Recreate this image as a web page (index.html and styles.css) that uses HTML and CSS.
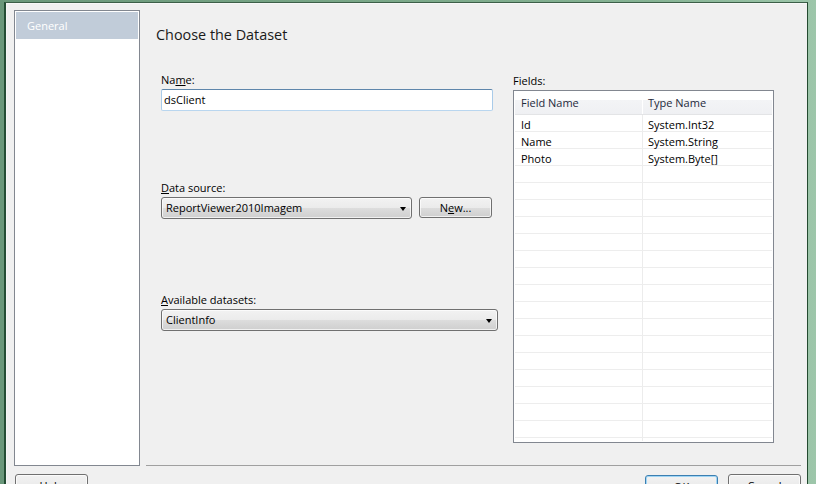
FILE: index.html
```html
<!DOCTYPE html>
<html>
<head>
<meta charset="utf-8">
<link rel="stylesheet" href="styles.css">
</head>
<body>
<div class="frame">
  <div class="outer">
    <div class="window">
      <div class="main">
        <div class="nav">
          <div class="nav-item selected">General</div>
        </div>
        <div class="page">
          <div class="title">Choose the Dataset</div>
          <div class="form">
            <div class="col-left">
              <div class="group g-name">
                <div class="label">Na<u>m</u>e:</div>
                <div class="textbox">dsClient</div>
              </div>
              <div class="group g-source">
                <div class="label"><u>D</u>ata source:</div>
                <div class="row">
                  <div class="combo w-source"><span>ReportViewer2010Imagem</span><i class="arrow"></i></div>
                  <div class="btn btn-new">N<u>e</u>w...</div>
                </div>
              </div>
              <div class="group g-avail">
                <div class="label"><u>A</u>vailable datasets:</div>
                <div class="combo w-full"><span>ClientInfo</span><i class="arrow"></i></div>
              </div>
            </div>
            <div class="col-right">
              <div class="label">Fields:</div>
              <div class="grid">
                <div class="grid-head">
                  <div class="c1">Field Name</div>
                  <div class="c2">Type Name</div>
                </div>
                <div class="grid-body">
                  <div class="grow"><div class="c1">Id</div><div class="c2">System.Int32</div></div>
                  <div class="grow"><div class="c1">Name</div><div class="c2">System.String</div></div>
                  <div class="grow"><div class="c1">Photo</div><div class="c2">System.Byte[]</div></div>
                  <div class="grow"><div class="c1"></div><div class="c2"></div></div>
                  <div class="grow"><div class="c1"></div><div class="c2"></div></div>
                  <div class="grow"><div class="c1"></div><div class="c2"></div></div>
                  <div class="grow"><div class="c1"></div><div class="c2"></div></div>
                  <div class="grow"><div class="c1"></div><div class="c2"></div></div>
                  <div class="grow"><div class="c1"></div><div class="c2"></div></div>
                  <div class="grow"><div class="c1"></div><div class="c2"></div></div>
                  <div class="grow"><div class="c1"></div><div class="c2"></div></div>
                  <div class="grow"><div class="c1"></div><div class="c2"></div></div>
                  <div class="grow"><div class="c1"></div><div class="c2"></div></div>
                  <div class="grow"><div class="c1"></div><div class="c2"></div></div>
                  <div class="grow"><div class="c1"></div><div class="c2"></div></div>
                  <div class="grow"><div class="c1"></div><div class="c2"></div></div>
                  <div class="grow"><div class="c1"></div><div class="c2"></div></div>
                  <div class="grow"><div class="c1"></div><div class="c2"></div></div>
                  <div class="grow"><div class="c1"></div><div class="c2"></div></div>
                  <div class="grow"><div class="c1"></div><div class="c2"></div></div>
                </div>
              </div>
            </div>
          </div>
        </div>
      </div>
      <div class="footer">
        <div class="btn btn-foot"><u>H</u>elp</div>
        <div class="spacer"></div>
        <div class="btn btn-foot btn-default">OK</div>
        <div class="btn btn-foot">Cancel</div>
      </div>
    </div>
  </div>
</div>
</body>
</html>
```
FILE: styles.css
```css
html, body {
  margin: 0;
  padding: 0;
}
body {
  width: 816px;
  height: 484px;
  overflow: hidden;
  font-family: "Open Sans", "Noto Sans", sans-serif;
  font-size: 11px;
  color: #000;
}
u { text-decoration: underline; text-underline-offset: 1px; }

.frame {
  height: 484px;
  box-sizing: border-box;
  padding: 2px 8px 0 4px;
  background: linear-gradient(to right, #6a977a 0, #78a586 40%, #86b394 80%, #9dc6aa 100%);
}
.outer {
  height: 100%;
  box-sizing: border-box;
  border-top: 1px solid #3c5f48;
  border-left: 2px solid #244d34;
  border-right: 1px solid #234a30;
}
.window {
  height: 100%;
  box-sizing: border-box;
  border-top: 1px solid #f8f8f8;
  border-left: 1px solid #f6f6f6;
  background: #f0f0f0;
  padding: 6px 6px 0 7px;
}

.main {
  display: flex;
  height: 456px;
}
.nav {
  width: 126px;
  height: 456px;
  box-sizing: border-box;
  border: 1px solid #828790;
  background: #fff;
  padding: 1px;
}
.nav-item {
  height: 27px;
  line-height: 27px;
  padding-left: 11px;
}
.nav-item.selected {
  background: #c1ccd9;
  color: #fff;
}

.page {
  flex: 1;
  margin-left: 6px;
  height: 456px;
  box-sizing: border-box;
  border-bottom: 1px solid #a0a0a0;
  padding-left: 10px;
}
.title {
  margin-top: 15px;
  font-size: 14.4px;
  line-height: 20px;
  color: #1a1a1a;
}
.form {
  display: flex;
  gap: 15px;
  margin-top: 27px;
  padding-left: 5px;
}
.col-left {
  width: 337px;
}
.label {
  line-height: 16px;
  margin-bottom: 1px;
}
.g-source { margin-top: 69px; }
.g-avail { margin-top: 73px; }

.textbox {
  width: 332px;
  height: 22px;
  box-sizing: border-box;
  border: 1px solid;
  border-color: #5e86ab #a9cbe9 #b9d6ef #a9cbe9;
  border-radius: 2px;
  background: #fff;
  padding-left: 2px;
  line-height: 19px;
}
.row {
  display: flex;
  align-items: flex-start;
}
.combo {
  height: 22px;
  box-sizing: border-box;
  border: 1px solid #707070;
  border-radius: 3px;
  background: linear-gradient(#f2f2f2 0, #ebebeb 50%, #dddddd 50%, #cfcfcf 100%);
  box-shadow: inset 0 0 0 1px rgba(255,255,255,0.7);
  display: flex;
  align-items: center;
  padding: 0 5px 0 4px;
  line-height: 20px;
}
.combo span { flex: 1; }
.w-source { width: 251px; }
.w-full { width: 337px; }
.arrow {
  width: 0;
  height: 0;
  border-left: 3.5px solid transparent;
  border-right: 3.5px solid transparent;
  border-top: 4px solid #000;
  margin-top: 1px;
}
.btn {
  box-sizing: border-box;
  border: 1px solid #707070;
  border-radius: 3px;
  background: linear-gradient(#f2f2f2 0, #ebebeb 50%, #dddddd 50%, #cfcfcf 100%);
  box-shadow: inset 0 0 0 1px rgba(255,255,255,0.7);
  text-align: center;
}
.btn-new {
  width: 73px;
  height: 21px;
  line-height: 19px;
  margin-left: 7px;
}

.col-right {
  width: 261px;
  padding-top: 1px;
}
.grid {
  height: 353px;
  box-sizing: border-box;
  border: 1px solid #828790;
  background: #fff;
  padding: 1px;
  display: flex;
  flex-direction: column;
}
.grid-head {
  display: flex;
  height: 23px;
  box-sizing: border-box;
  border-bottom: 1px solid #e3e4e6;
  background: linear-gradient(#ffffff 0, #ffffff 36%, #f3f4f6 37%, #eff0f3 100%);
  line-height: 22px;
  color: #1e2a3c;
}
.grid-head .c1 { border-right: 1px solid #fff; }
.c1 {
  width: 128px;
  box-sizing: border-box;
  padding-left: 6px;
  border-right: 1px solid #ececec;
}
.c2 {
  flex: 1;
  padding-left: 5px;
}
.grid-body {
  flex: 1;
  overflow: hidden;
}
.grow {
  display: flex;
  height: 17px;
  box-sizing: border-box;
  border-bottom: 1px solid #ededed;
  line-height: 16px;
}
.grow .c1, .grow .c2 { padding-top: 2px; }

.footer {
  display: flex;
  margin-top: 8px;
  padding-left: 1px;
  gap: 10px;
}
.spacer { flex: 1; }
.btn-foot {
  width: 73px;
  height: 23px;
  line-height: 21px;
}
.btn-default {
  border-color: #3c7fb1;
  box-shadow: inset 0 0 0 1px #9fd5f5;
  margin-top: 1px;
}
```
